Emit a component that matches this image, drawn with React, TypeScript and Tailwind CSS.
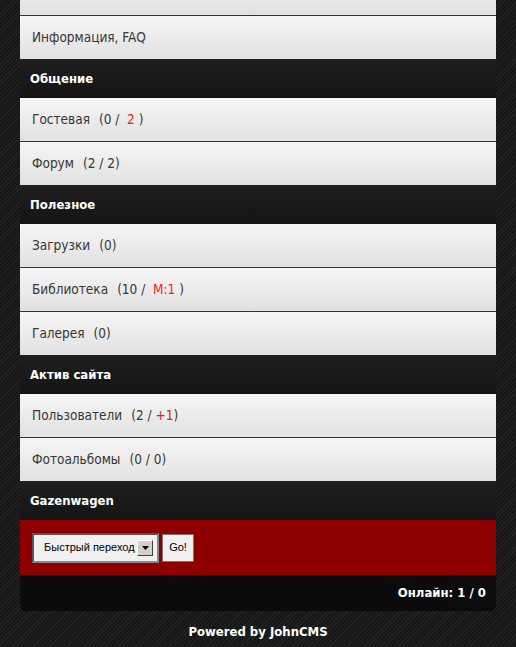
import React from 'react';

type Item = { label: string; count: React.ReactNode };

const red = 'text-[#ff1a1a]';

const groups: { title?: string; items: Item[] }[] = [
  {
    items: [
      { label: 'Новости сайта', count: <>(1 / <span className={red}>+1</span>)</> },
      { label: 'Информация, FAQ', count: null },
    ],
  },
  {
    title: 'Общение',
    items: [
      { label: 'Гостевая', count: <>(0 / &nbsp;<span className={red}>2</span>&nbsp;)</> },
      { label: 'Форум', count: <>(2 / 2)</> },
    ],
  },
  {
    title: 'Полезное',
    items: [
      { label: 'Загрузки', count: <>(0)</> },
      { label: 'Библиотека', count: <>(10 / &nbsp;<span className={red}>M:1</span>&nbsp;)</> },
      { label: 'Галерея', count: <>(0)</> },
    ],
  },
  {
    title: 'Актив сайта',
    items: [
      { label: 'Пользователи', count: <>(2 / <span className="text-[#e0201a]">+1</span>)</> },
      { label: 'Фотоальбомы', count: <>(0 / 0)</> },
    ],
  },
];

function Header({ title }: { title: string }) {
  return (
    <div className="h-[39px] flex items-center px-[10px] bg-gradient-to-b from-[#1f1f1f] to-[#141414] text-white font-bold text-[13px]">
      {title}
    </div>
  );
}

function MenuItem({ item, first }: { item: Item; first: boolean }) {
  return (
    <div
      className={`h-[43px] flex items-center px-[12px] bg-gradient-to-b from-[#f6f6f6] to-[#e1e1e1] text-[#363636] text-[13.5px] ${
        first ? '' : 'border-t border-[#333]'
      } box-content`}
    >
      <span>{item.label}</span>
      {item.count && <span className="ml-[9px]">{item.count}</span>}
    </div>
  );
}

export default function App() {
  return (
    <div className="min-h-[647px] overflow-hidden bg-[#1b1b1b] bg-[repeating-linear-gradient(135deg,#242424_0px,#242424_1px,#171717_1px,#171717_3px)] font-['DejaVu_Sans_Condensed','DejaVu_Sans',sans-serif]">
      <div className="mx-[20px] -mt-[28px]">
        {groups.map((g, gi) => (
          <div key={gi}>
            {g.title && <Header title={g.title} />}
            {g.items.map((it, i) => (
              <MenuItem key={it.label} item={it} first={i === 0} />
            ))}
          </div>
        ))}
        <Header title="Gazenwagen" />
        <div className="h-[55px] bg-[#8e0000] flex items-center pl-[12px] gap-[3px]">
          <div className="h-[30px] w-[127px] bg-[#f0f0f0] border-2 border-t-[#555] border-l-[#555] border-b-[#888] border-r-[#888] flex items-center justify-between pl-[10px] pr-[4px] font-['Liberation_Sans',sans-serif] text-[11px] text-black">
            <span>Быстрый переход</span>
            <span className="w-[16px] h-[16px] bg-[#d4d0c8] border border-t-[#fff] border-l-[#fff] border-b-[#404040] border-r-[#404040] flex items-center justify-center">
              <svg width="7" height="4" viewBox="0 0 7 4">
                <path d="M0 0h7L3.5 4z" fill="#000" />
              </svg>
            </span>
          </div>
          <button className="h-[28px] w-[32px] bg-[#f0f0f0] border border-[#777] font-['Liberation_Sans',sans-serif] text-[11px] text-black">
            Go!
          </button>
        </div>
        <div className="h-[36px] bg-[#0b0b0b] rounded-b-[6px] flex items-center justify-end pr-[10px] text-white font-bold text-[13px]">
          Онлайн: 1 / 0
        </div>
        <div className="h-[42px] flex items-center justify-center text-white font-bold text-[13px]">
          Powered by JohnCMS
        </div>
      </div>
    </div>
  );
}
